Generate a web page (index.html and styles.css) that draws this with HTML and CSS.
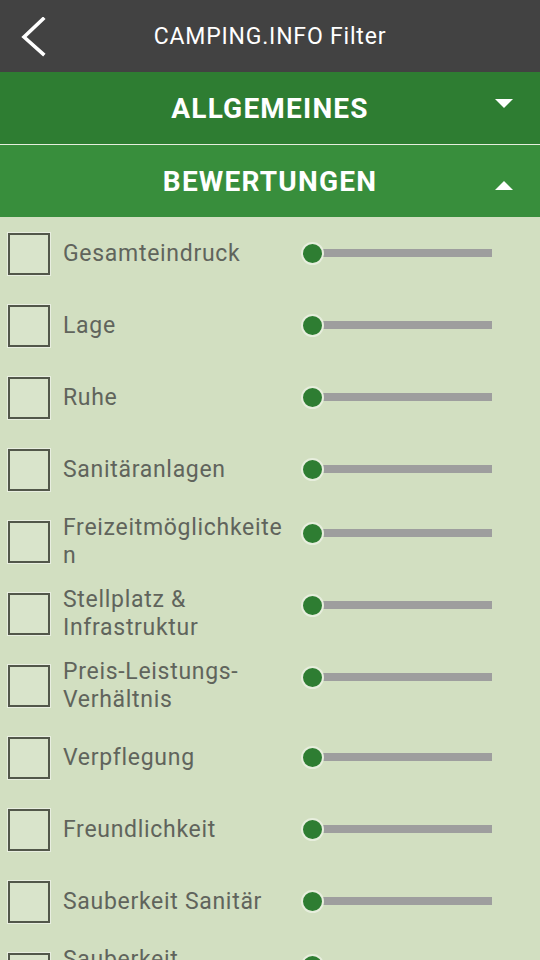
FILE: index.html
```html
<!DOCTYPE html>
<html lang="de">
<head>
<meta charset="utf-8">
<title>CAMPING.INFO Filter</title>
<link rel="stylesheet" href="styles.css">
</head>
<body>
<header class="topbar">
  <svg class="back" width="30" height="40" viewBox="0 0 30 40"><polyline points="22,2 3,20 22,37" fill="none" stroke="#fff" stroke-width="3.6" stroke-linecap="square"/></svg>
  <h1 class="title">CAMPING.INFO Filter</h1>
</header>
<section class="section section-dark">
  <span class="section-title">ALLGEMEINES</span>
  <span class="tri tri-down"></span>
</section>
<section class="section section-light">
  <span class="section-title">BEWERTUNGEN</span>
  <span class="tri tri-up"></span>
</section>
<main class="list">
  <div class="row"><span class="check"></span><span class="label">Gesamteindruck</span><div class="slider"><span class="track"></span><span class="thumb"></span></div></div>
  <div class="row"><span class="check"></span><span class="label">Lage</span><div class="slider"><span class="track"></span><span class="thumb"></span></div></div>
  <div class="row"><span class="check"></span><span class="label">Ruhe</span><div class="slider"><span class="track"></span><span class="thumb"></span></div></div>
  <div class="row"><span class="check"></span><span class="label">Sanitäranlagen</span><div class="slider"><span class="track"></span><span class="thumb"></span></div></div>
  <div class="row two"><span class="check"></span><span class="label">Freizeitmöglichkeiten</span><div class="slider"><span class="track"></span><span class="thumb"></span></div></div>
  <div class="row two"><span class="check"></span><span class="label">Stellplatz &amp; Infrastruktur</span><div class="slider"><span class="track"></span><span class="thumb"></span></div></div>
  <div class="row two"><span class="check"></span><span class="label">Preis-Leistungs-Verhältnis</span><div class="slider"><span class="track"></span><span class="thumb"></span></div></div>
  <div class="row"><span class="check"></span><span class="label">Verpflegung</span><div class="slider"><span class="track"></span><span class="thumb"></span></div></div>
  <div class="row"><span class="check"></span><span class="label">Freundlichkeit</span><div class="slider"><span class="track"></span><span class="thumb"></span></div></div>
  <div class="row"><span class="check"></span><span class="label">Sauberkeit Sanitär</span><div class="slider"><span class="track"></span><span class="thumb"></span></div></div>
  <div class="row two"><span class="check"></span><span class="label">Sauberkeit Mietunterkünfte</span><div class="slider"><span class="track"></span><span class="thumb"></span></div></div>
</main>
</body>
</html>
```
FILE: styles.css
```css
* { box-sizing: border-box; }
html, body { margin: 0; padding: 0; }
body {
  width: 540px;
  height: 960px;
  overflow: hidden;
  background: #d2dfc1;
  font-family: Roboto, "Liberation Sans", sans-serif;
}
.topbar {
  height: 72px;
  background: #424242;
  display: flex;
  align-items: center;
  justify-content: center;
  position: relative;
}
.back {
  position: absolute;
  left: 21px;
  top: 17px;
}
.title {
  margin: 0;
  font-weight: 400;
  font-size: 23px;
  letter-spacing: 0.8px;
  color: #ffffff;
}
.section {
  height: 72px;
  display: flex;
  align-items: center;
  justify-content: center;
  position: relative;
}
.section-dark { background: #2e7d32; border-bottom: 1px solid #e6eede; height: 73px; }
.section-light { background: #388e3c; }
.section-title {
  color: #fff;
  font-weight: 700;
  font-size: 28px;
  letter-spacing: 1.2px;
}
.tri {
  position: absolute;
  right: 27px;
  width: 0;
  height: 0;
  border-left: 9px solid transparent;
  border-right: 9px solid transparent;
}
.tri-down { border-top: 9px solid #fff; top: 27px; }
.tri-up { border-bottom: 9px solid #fff; top: 36px; }
.list { display: flex; flex-direction: column; }
.row {
  height: 72px;
  display: flex;
  align-items: center;
  padding-left: 8px;
}
.check {
  width: 42px;
  height: 42px;
  border: 2px solid #52574a;
  background: #d9e4cb;
  box-shadow: 0 0 0 1px #e8eee0;
  flex: none;
  margin-top: 2px;
}
.label {
  width: 226px;
  margin-left: 13px;
  padding-top: 2px;
  font-size: 23px;
  letter-spacing: 0.7px;
  line-height: 28px;
  color: #60645c;
  overflow-wrap: anywhere;
  flex: none;
}
.slider {
  position: relative;
  width: 191px;
  height: 23px;
  margin-left: 12px;
  display: flex;
  align-items: center;
  flex: none;
}
.row.two .slider { margin-bottom: 16px; }
.track {
  margin-left: 11px;
  width: 180px;
  height: 8px;
  background: #9e9e9e;
}
.thumb {
  position: absolute;
  left: 0;
  top: 0;
  width: 23px;
  height: 23px;
  border-radius: 50%;
  background: #2e7d32;
  border: 2.5px solid #e7eedd;
}
```
